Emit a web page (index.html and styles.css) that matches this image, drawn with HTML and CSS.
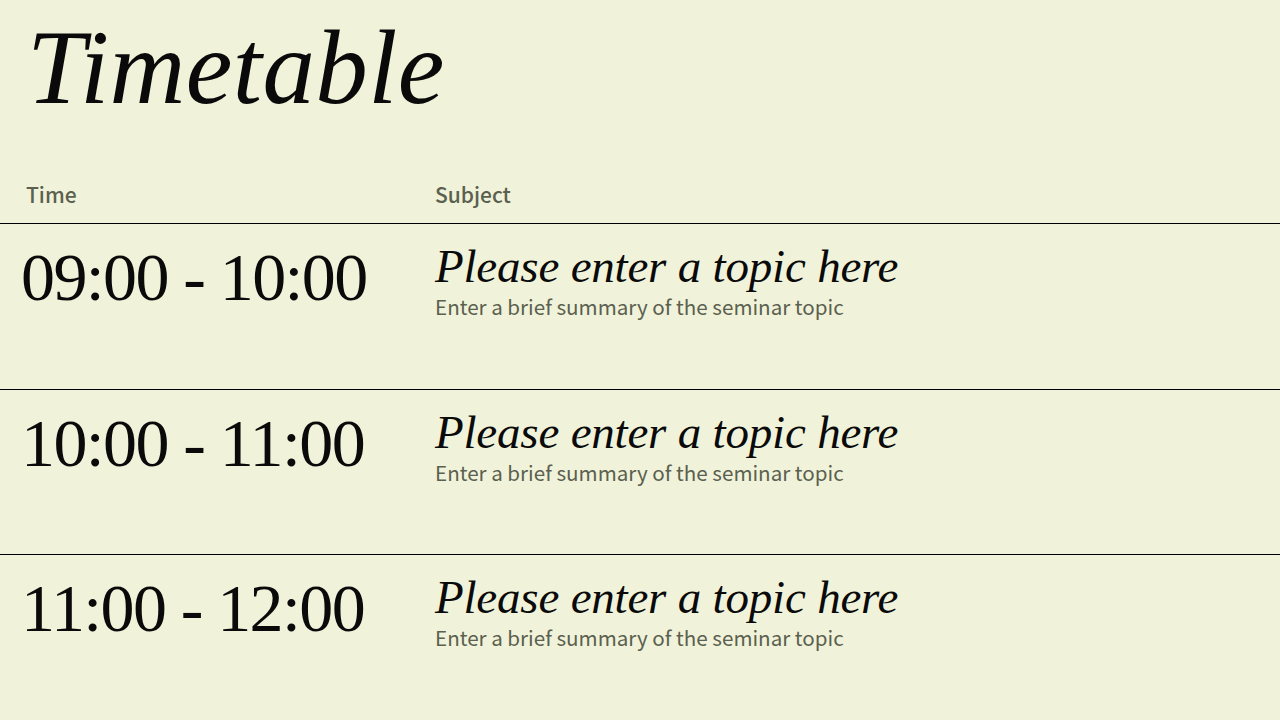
FILE: index.html
```html
<!DOCTYPE html>
<html lang="en">
<head>
<meta charset="utf-8">
<title>Timetable</title>
<link rel="stylesheet" href="styles.css">
</head>
<body>
<main class="page">
  <h1 class="title">Timetable</h1>
  <div class="table">
    <div class="head">
      <div class="head-time">Time</div>
      <div class="head-subject">Subject</div>
    </div>
    <div class="row">
      <div class="time">09:00 - 10:00</div>
      <div class="subject">
        <div class="topic">Please enter a topic here</div>
        <div class="summary">Enter a brief summary of the seminar topic</div>
      </div>
    </div>
    <div class="row">
      <div class="time">10:00 - 11:00</div>
      <div class="subject">
        <div class="topic">Please enter a topic here</div>
        <div class="summary">Enter a brief summary of the seminar topic</div>
      </div>
    </div>
    <div class="row last">
      <div class="time">11:00 - 12:00</div>
      <div class="subject">
        <div class="topic">Please enter a topic here</div>
        <div class="summary">Enter a brief summary of the seminar topic</div>
      </div>
    </div>
  </div>
</main>
</body>
</html>
```

FILE: styles.css
```css
html, body {
  margin: 0;
  padding: 0;
}
body {
  background: #f0f3da;
  width: 1280px;
  height: 720px;
  overflow: hidden;
}
.page {
  display: flex;
  flex-direction: column;
}
.title {
  margin: 16px 0 0 27px;
  font-family: "Liberation Serif", serif;
  font-style: italic;
  font-weight: 400;
  font-size: 105px;
  line-height: 104px;
  color: #0a0a0a;
  letter-spacing: 0.4px;
}
.table {
  margin-top: 62px;
  display: flex;
  flex-direction: column;
}
.head {
  display: grid;
  grid-template-columns: 435px 1fr;
  padding-bottom: 17px;
  border-bottom: 1px solid #000;
  font-family: "Noto Sans CJK JP", "Noto Sans", sans-serif;
  font-weight: 500;
  font-size: 21px;
  line-height: 24px;
  color: #5b604f;
}
.head-time {
  padding-left: 26px;
}
.row {
  display: grid;
  grid-template-columns: 435px 1fr;
  height: 165.5px;
  box-sizing: border-box;
  border-bottom: 1px solid #000;
  padding-top: 19px;
}
.row.last {
  border-bottom: none;
}
.time {
  padding-left: 21px;
  font-family: "Liberation Serif", serif;
  font-size: 68px;
  line-height: 68px;
  letter-spacing: -1.6px;
  color: #0a0a0a;
}
.subject {
  display: flex;
  flex-direction: column;
}
.topic {
  font-family: "Liberation Serif", serif;
  font-style: italic;
  font-size: 47px;
  line-height: 46px;
  letter-spacing: -0.2px;
  color: #0a0a0a;
}
.summary {
  margin-top: 5px;
  font-family: "Noto Sans CJK JP", "Noto Sans", sans-serif;
  font-size: 20.6px;
  line-height: 24px;
  color: #5b604f;
}
```
